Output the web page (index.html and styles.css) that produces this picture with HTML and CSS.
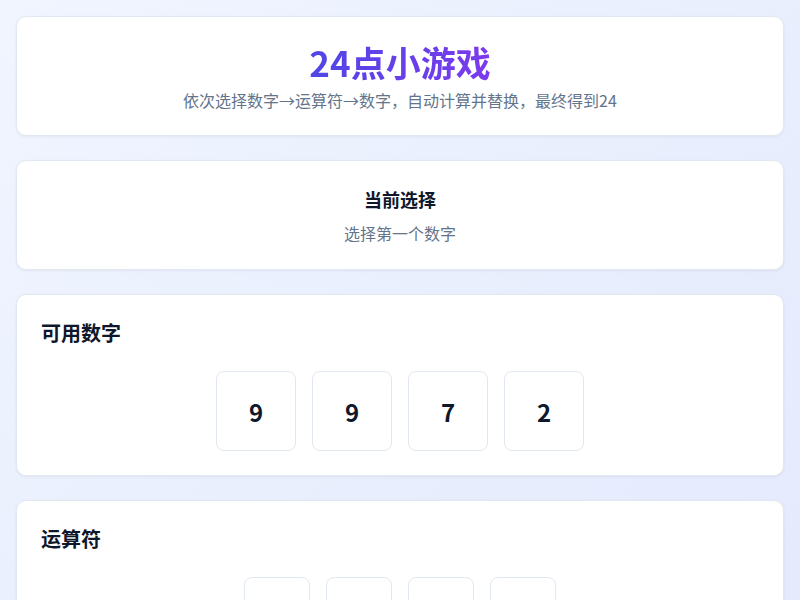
FILE: index.html
```html
<!DOCTYPE html>
<html lang="zh-CN">
<head>
<meta charset="utf-8">
<title>24点小游戏</title>
<link rel="stylesheet" href="styles.css">
</head>
<body>
<main class="app">
  <section class="card header">
    <h1 class="title">24点小游戏</h1>
    <p class="subtitle">依次选择数字→运算符→数字，自动计算并替换，最终得到24</p>
  </section>
  <section class="card status">
    <h2 class="status-title">当前选择</h2>
    <p class="status-text">选择第一个数字</p>
  </section>
  <section class="card panel">
    <h2 class="panel-title">可用数字</h2>
    <div class="tiles">
      <button class="tile num">9</button>
      <button class="tile num">9</button>
      <button class="tile num">7</button>
      <button class="tile num">2</button>
    </div>
  </section>
  <section class="card panel">
    <h2 class="panel-title">运算符</h2>
    <div class="tiles">
      <button class="tile op">+</button>
      <button class="tile op">-</button>
      <button class="tile op">*</button>
      <button class="tile op">/</button>
    </div>
  </section>
</main>
</body>
</html>
```
FILE: styles.css
```css
* { box-sizing: border-box; }
html, body { margin: 0; padding: 0; }
body {
  font-family: "Noto Sans CJK SC", "Noto Sans", sans-serif;
  background: linear-gradient(135deg, #f0f5ff 0%, #e4e9fd 100%);
  min-height: 100vh;
  color: #0f172a;
}
.app {
  padding: 16px;
  display: flex;
  flex-direction: column;
  gap: 24px;
}
.card {
  background: #ffffff;
  border: 1px solid #e2e8f0;
  border-radius: 10px;
  box-shadow: 0 1px 3px rgba(15, 23, 42, 0.06);
  padding: 24px;
}
.header {
  text-align: center;
  padding: 23px 24px 23px;
  display: flex;
  flex-direction: column;
  align-items: center;
}
.title {
  margin: 0;
  font-size: 35px;
  line-height: 44px;
  font-weight: 700;
  background: linear-gradient(90deg, #4f46e5, #7c3aed);
  -webkit-background-clip: text;
  background-clip: text;
  color: transparent;
}
.subtitle {
  margin: 4px 0 0;
  font-size: 16px;
  line-height: 24px;
  color: #64748b;
}
.status { text-align: center; }
.status-title {
  margin: 0;
  font-size: 18px;
  line-height: 28px;
  font-weight: 700;
}
.status-text {
  margin: 8px 0 0;
  font-size: 16px;
  line-height: 24px;
  color: #64748b;
}
.panel-title {
  margin: 0 0 24px;
  font-size: 20px;
  line-height: 28px;
  font-weight: 700;
}
.tiles {
  display: flex;
  justify-content: center;
  gap: 16px;
}
.tile {
  font-family: inherit;
  background: #ffffff;
  border: 1px solid #e2e8f0;
  border-radius: 8px;
  color: #0f172a;
  font-weight: 700;
  padding: 0;
}
.num { width: 80px; height: 80px; font-size: 24px; }
.op { width: 66px; height: 66px; font-size: 24px; }
```
